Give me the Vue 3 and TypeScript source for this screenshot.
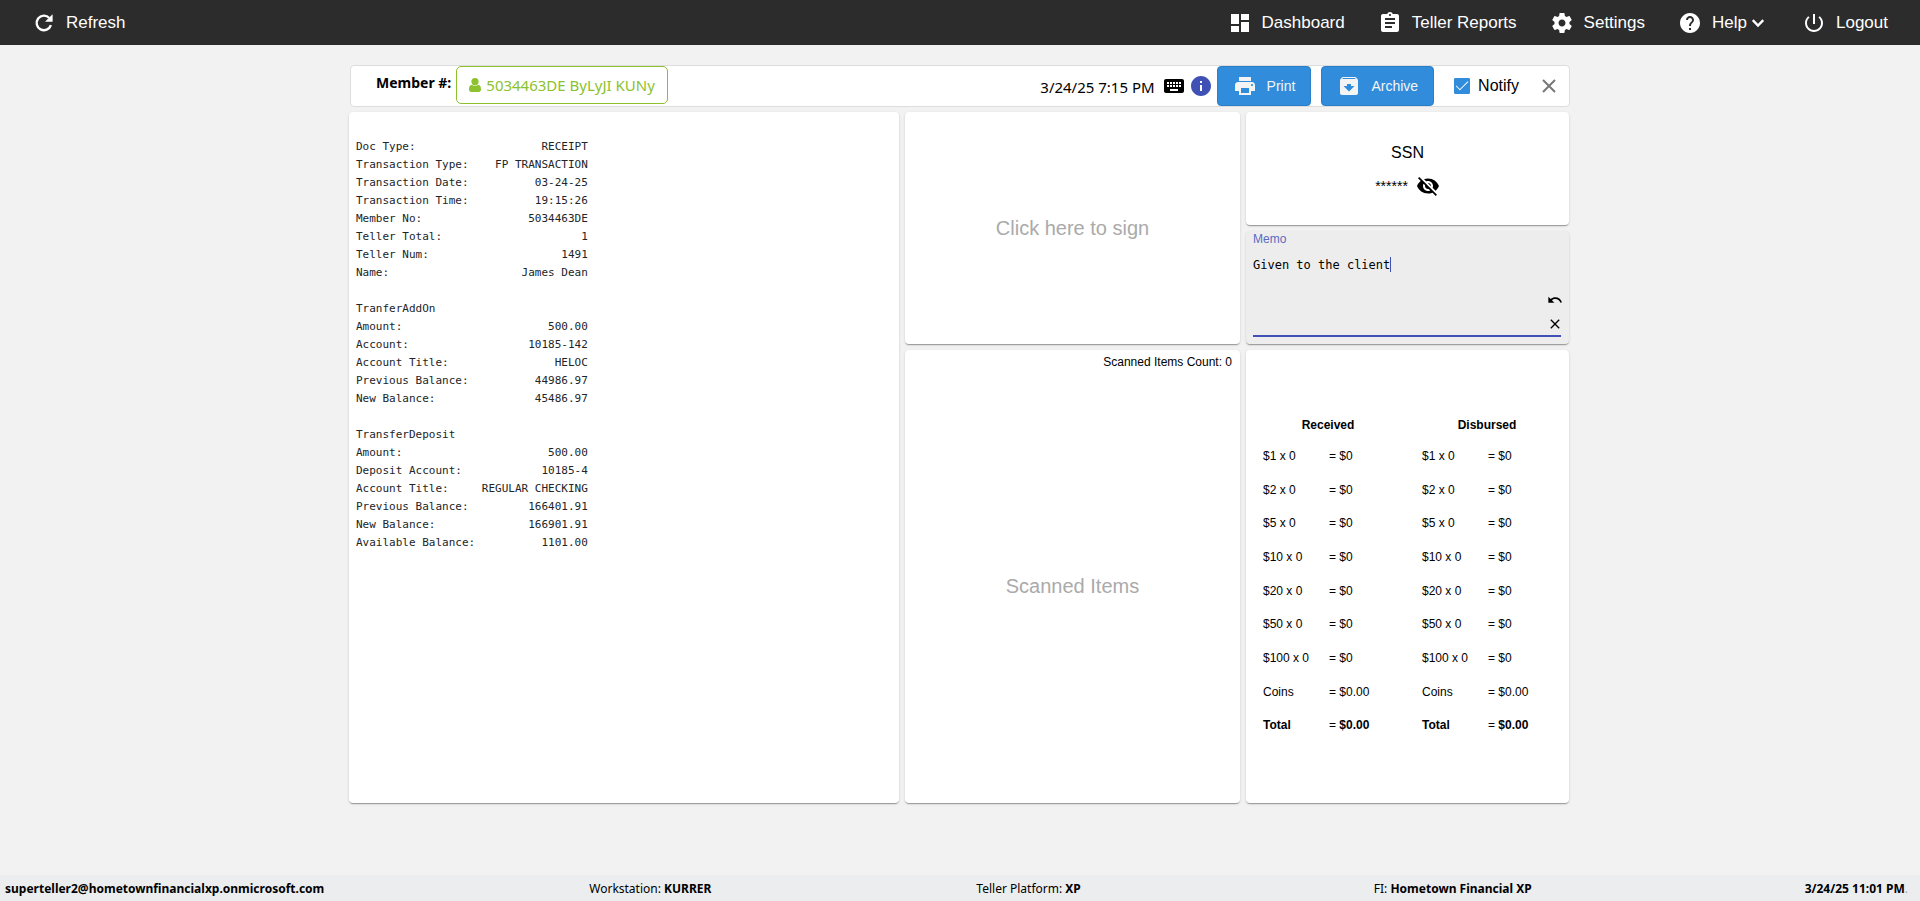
<script setup lang="ts">
import { ref } from 'vue'

interface NavItem {
  label: string
  path: string
  menu?: boolean
}

interface CashRow {
  label: string
  amount: string
  total?: boolean
}

const navItems: NavItem[] = [
  { label: 'Dashboard', path: 'M3 13h8V3H3v10zm0 8h8v-6H3v6zm10 0h8V11h-8v10zm0-18v6h8V3h-8z' },
  {
    label: 'Teller Reports',
    path: 'M19 3h-4.18C14.4 1.84 13.3 1 12 1c-1.3 0-2.4.84-2.82 2H5c-1.1 0-2 .9-2 2v14c0 1.1.9 2 2 2h14c1.1 0 2-.9 2-2V5c0-1.1-.9-2-2-2zm-7 0c.55 0 1 .45 1 1s-.45 1-1 1-1-.45-1-1 .45-1 1-1zm2 14H7v-2h7v2zm3-4H7v-2h10v2zm0-4H7V7h10v2z',
  },
  {
    label: 'Settings',
    path: 'M19.43 12.98c.04-.32.07-.64.07-.98s-.03-.66-.07-.98l2.11-1.65c.19-.15.24-.42.12-.64l-2-3.46c-.12-.22-.39-.3-.61-.22l-2.49 1c-.52-.4-1.08-.73-1.69-.98l-.38-2.65C14.46 2.18 14.25 2 14 2h-4c-.25 0-.46.18-.49.42l-.38 2.65c-.61.25-1.17.59-1.69.98l-2.49-1c-.23-.09-.49 0-.61.22l-2 3.46c-.13.22-.07.49.12.64l2.11 1.65c-.04.32-.07.65-.07.98s.03.66.07.98l-2.11 1.65c-.19.15-.24.42-.12.64l2 3.46c.12.22.39.3.61.22l2.49-1c.52.4 1.08.73 1.69.98l.38 2.65c.03.24.24.42.49.42h4c.25 0 .46-.18.49-.42l.38-2.65c.61-.25 1.17-.59 1.69-.98l2.49 1c.23.09.49 0 .61-.22l2-3.46c.12-.22.07-.49-.12-.64l-2.11-1.65zM12 15.5c-1.93 0-3.5-1.57-3.5-3.5s1.57-3.5 3.5-3.5 3.5 1.57 3.5 3.5-1.57 3.5-3.5 3.5z',
  },
  {
    label: 'Help',
    path: 'M12 2C6.48 2 2 6.48 2 12s4.48 10 10 10 10-4.48 10-10S17.52 2 12 2zm1 17h-2v-2h2v2zm2.07-7.75l-.9.92C13.45 12.9 13 13.5 13 15h-2v-.5c0-1.1.45-2.1 1.17-2.83l1.24-1.26c.37-.36.59-.86.59-1.41 0-1.1-.9-2-2-2s-2 .9-2 2H8c0-2.21 1.79-4 4-4s4 1.79 4 4c0 .88-.36 1.68-.93 2.25z',
    menu: true,
  },
  {
    label: 'Logout',
    path: 'M13 3h-2v10h2V3zm4.83 2.17l-1.42 1.42C17.99 7.86 19 9.81 19 12c0 3.87-3.13 7-7 7s-7-3.13-7-7c0-2.19 1.01-4.14 2.58-5.42L6.17 5.17C4.23 6.82 3 9.26 3 12c0 4.97 4.03 9 9 9s9-4.03 9-9c0-2.74-1.23-5.18-3.17-6.83z',
  },
]

const receiptWidth = 35
const receiptLines: string[][] = [
  ['Doc Type:', 'RECEIPT'],
  ['Transaction Type:', 'FP TRANSACTION'],
  ['Transaction Date:', '03-24-25'],
  ['Transaction Time:', '19:15:26'],
  ['Member No:', '5034463DE'],
  ['Teller Total:', '1'],
  ['Teller Num:', '1491'],
  ['Name:', 'James Dean'],
  [],
  ['TranferAddOn'],
  ['Amount:', '500.00'],
  ['Account:', '10185-142'],
  ['Account Title:', 'HELOC'],
  ['Previous Balance:', '44986.97'],
  ['New Balance:', '45486.97'],
  [],
  ['TransferDeposit'],
  ['Amount:', '500.00'],
  ['Deposit Account:', '10185-4'],
  ['Account Title:', 'REGULAR CHECKING'],
  ['Previous Balance:', '166401.91'],
  ['New Balance:', '166901.91'],
  ['Available Balance:', '1101.00'],
]
const receipt = receiptLines
  .map(([label = '', value = '']) => label + value.padStart(value ? receiptWidth - label.length : 0))
  .join('\n')

const cashRows: CashRow[] = [
  ...[1, 2, 5, 10, 20, 50, 100].map((n) => ({ label: `$${n} x 0`, amount: '$0' })),
  { label: 'Coins', amount: '$0.00' },
  { label: 'Total', amount: '$0.00', total: true },
]

const notify = ref(true)
const initialMemo = 'Given to the client'
const memo = ref(initialMemo)
</script>

<template>
  <div class="app">
    <header class="topbar">
      <button type="button" class="nav-item">
        <svg class="icon" viewBox="0 0 24 24" aria-hidden="true">
          <path d="M18.9 14.2A7.3 7.3 0 1 1 17.3 7" fill="none" stroke="currentColor" stroke-width="2.4" />
          <path d="M20.6 3.2v7.6H13z" />
        </svg>
        <span>Refresh</span>
      </button>
      <nav class="nav">
        <a v-for="item in navItems" :key="item.label" href="#" class="nav-item">
          <svg class="icon" viewBox="0 0 24 24" aria-hidden="true"><path :d="item.path" /></svg>
          <span>{{ item.label }}</span>
          <svg v-if="item.menu" class="chevron" viewBox="0 0 12 12" aria-hidden="true">
            <path d="M1.5 3.5 6 8.2l4.500-4.700" fill="none" stroke="currentColor" stroke-width="2" />
          </svg>
        </a>
      </nav>
    </header>

    <main class="main">
      <section class="toolbar">
        <div class="member">
          <span class="member-label">Member #:</span>
          <button type="button" class="member-button">
            <svg class="user-icon" viewBox="0 0 12 14" aria-hidden="true">
              <path d="M6 0a3.600 3.600 0 0 1 3.600 3.700C9.600 5.900 8 7.500 6 7.500S2.400 5.900 2.400 3.700A3.600 3.600 0 0 1 6 0z" />
              <path d="M2.900 6.800C1 7 0 8.600 0 11.200 0 12.900 1 14 2.400 14h7.200c1.400 0 2.400-1.100 2.400-2.800 0-2.600-1-4.200-2.900-4.400a4.400 4.400 0 0 1-6.200 0z" />
            </svg>
            <span>5034463DE ByLyJI KUNy</span>
          </button>
        </div>
        <div class="tools">
          <time class="stamp">3/24/25 7:15 PM</time>
          <svg class="icon keyboard" viewBox="0 0 24 24" aria-hidden="true">
            <path d="M20 5H4c-1.100 0-1.990.9-1.990 2L2 17c0 1.100.9 2 2 2h16c1.100 0 2-.9 2-2V7c0-1.100-.9-2-2-2zm-9 3h2v2h-2V8zm0 3h2v2h-2v-2zM8 8h2v2H8V8zm0 3h2v2H8v-2zm-1 2H5v-2h2v2zm0-3H5V8h2v2zm9 7H8v-2h8v2zm0-4h-2v-2h2v2zm0-3h-2V8h2v2zm3 3h-2v-2h2v2zm0-3h-2V8h2v2z" />
          </svg>
          <svg class="icon info" viewBox="0 0 24 24" aria-hidden="true">
            <path d="M12 2C6.480 2 2 6.480 2 12s4.480 10 10 10 10-4.480 10-10S17.520 2 12 2zm1 15h-2v-6h2v6zm0-8h-2V7h2v2z" />
          </svg>
          <button type="button" class="action">
            <svg class="icon" viewBox="0 0 24 24" aria-hidden="true">
              <path d="M19 8H5c-1.660 0-3 1.340-3 3v6h4v4h12v-4h4v-6c0-1.660-1.340-3-3-3zm-3 11H8v-5h8v5zm3-7c-.55 0-1-.45-1-1s.45-1 1-1 1 .45 1 1-.45 1-1 1zm-1-9H6v4h12V3z" />
            </svg>
            <span>Print</span>
          </button>
          <button type="button" class="action archive">
            <svg class="icon" viewBox="0 0 24 24" aria-hidden="true">
              <path d="M20.540 5.230l-1.390-1.680C18.880 3.210 18.470 3 18 3H6c-.47 0-.88.21-1.160.55L3.460 5.230C3.170 5.570 3 6.020 3 6.500V19c0 1.100.9 2 2 2h14c1.100 0 2-.9 2-2V6.500c0-.48-.17-.93-.46-1.270zM12 17.500L6.500 12H10v-2h4v2h3.500L12 17.500zM5.120 5l.81-1h12l.94 1H5.120z" />
            </svg>
            <span>Archive</span>
          </button>
          <label class="notify">
            <input v-model="notify" type="checkbox" />
            <span>Notify</span>
          </label>
          <button type="button" class="close" aria-label="Close">
            <svg viewBox="0 0 14 14" aria-hidden="true"><path d="M1 1l12 12M13 1 1 13" /></svg>
          </button>
        </div>
      </section>

      <section class="cards">
        <article class="card receipt-card">
          <pre class="receipt">{{ receipt }}</pre>
        </article>

        <button type="button" class="card sign-card placeholder">Click here to sign</button>

        <article class="card scan-card">
          <p class="scan-count">Scanned Items Count: 0</p>
          <div class="scan-body placeholder">Scanned Items</div>
        </article>

        <article class="card ssn-card">
          <h2 class="ssn-title">SSN</h2>
          <div class="ssn-value">
            <span>******</span>
            <button type="button" class="plain-button" aria-label="Show SSN">
              <svg class="icon" viewBox="0 0 24 24" aria-hidden="true">
                <path d="M12 7c2.760 0 5 2.240 5 5 0 .65-.13 1.260-.36 1.830l2.920 2.920c1.510-1.260 2.700-2.890 3.430-4.750-1.730-4.390-6-7.500-11-7.500-1.400 0-2.740.25-3.980.7l2.160 2.160C10.740 7.130 11.350 7 12 7zM2 4.270l2.280 2.280.46.46C3.080 8.300 1.780 10.020 1 12c1.730 4.390 6 7.500 11 7.500 1.550 0 3.030-.3 4.380-.84l.42.42L19.730 22 21 20.730 3.270 3 2 4.270zM7.530 9.800l1.550 1.550c-.05.21-.08.43-.08.65 0 1.660 1.340 3 3 3 .22 0 .44-.03.65-.08l1.550 1.550c-.67.33-1.410.53-2.200.53-2.760 0-5-2.240-5-5 0-.79.2-1.530.53-2.200zm4.310-.78l3.150 3.150.02-.16c0-1.660-1.340-3-3-3l-.17.01z" />
              </svg>
            </button>
          </div>
        </article>

        <article class="card memo-card">
          <label class="memo-label" for="memo">Memo</label>
          <div class="memo-field">
            <textarea id="memo" v-model="memo" class="memo-input" spellcheck="false"></textarea>
            <i class="caret" :style="{ left: memo.length + 'ch' }"></i>
            <div class="memo-tools">
              <button type="button" class="plain-button" aria-label="Undo" @click="memo = initialMemo">
                <svg class="small-icon" viewBox="0 0 24 24" aria-hidden="true">
                  <path d="M12.500 8c-2.650 0-5.050.99-6.900 2.600L2 7v9h9l-3.620-3.620c1.390-1.160 3.160-1.880 5.120-1.880 3.540 0 6.550 2.310 7.600 5.500l2.370-.78C21.080 11.030 17.150 8 12.500 8z" />
                </svg>
              </button>
              <button type="button" class="plain-button" aria-label="Clear" @click="memo = ''">
                <svg class="small-icon" viewBox="0 0 24 24" aria-hidden="true">
                  <path d="M19 6.410L17.590 5 12 10.590 6.410 5 5 6.410 10.590 12 5 17.590 6.410 19 12 13.410 17.590 19 19 17.590 13.410 12z" />
                </svg>
              </button>
            </div>
          </div>
        </article>

        <article class="card cash-card">
          <table v-for="title in ['Received', 'Disbursed']" :key="title" class="cash">
            <thead>
              <tr><th colspan="2">{{ title }}</th></tr>
            </thead>
            <tbody>
              <tr v-for="row in cashRows" :key="row.label" :class="{ total: row.total }">
                <td class="cash-label">{{ row.label }}</td>
                <td>= <span>{{ row.amount }}</span></td>
              </tr>
            </tbody>
          </table>
        </article>
      </section>
    </main>

    <footer class="footer">
      <strong>superteller2@hometownfinancialxp.onmicrosoft.com</strong>
      <span>Workstation: <strong>KURRER</strong></span>
      <span>Teller Platform: <strong>XP</strong></span>
      <span class="institution">FI: <strong>Hometown Financial XP</strong></span>
      <span><strong>3/24/25 11:01 PM</strong><span class="dot">.</span></span>
    </footer>
  </div>
</template>

<style>
body {
  margin: 0;
  background: #f2f2f2;
}
</style>

<style scoped>
* {
  box-sizing: border-box;
}

.app {
  display: flex;
  flex-direction: column;
  min-height: 100vh;
  color: #000;
  font-family: "Liberation Sans", Arial, sans-serif;
  font-size: 16px;
}

button {
  font-family: inherit;
  cursor: pointer;
}

.icon {
  flex: none;
  width: 24px;
  height: 24px;
  fill: currentColor;
}

.topbar {
  display: flex;
  align-items: center;
  justify-content: space-between;
  height: 45px;
  padding: 0 32px;
  background: #2c2c2c;
}

.nav {
  display: flex;
  gap: 33px;
}

.nav-item {
  display: flex;
  align-items: center;
  gap: 10px;
  padding: 0;
  border: 0;
  background: none;
  color: #fff;
  font-size: 17px;
  line-height: 24px;
  text-decoration: none;
}

.chevron {
  width: 14px;
  height: 14px;
  margin: 0 4px 0 -6px;
}

.main {
  display: flex;
  flex: 1;
  flex-direction: column;
  gap: 5px;
  width: 100%;
  max-width: 1222px;
  margin: 0 auto;
  padding: 20px 0 72px;
}

.toolbar {
  display: flex;
  justify-content: space-between;
  height: 42px;
  margin: 0 1px;
  border: 1px solid #ddd;
  border-radius: 4px;
  background: #fff;
  font-family: "Noto Sans", "Open Sans", sans-serif;
}

.member {
  display: flex;
  align-items: flex-start;
  gap: 5px;
  padding-left: 25px;
}

.member-label {
  font-size: 14px;
  font-weight: 700;
  line-height: 34px;
}

.member-button {
  display: flex;
  align-items: center;
  gap: 5px;
  height: 38px;
  padding: 0 12px;
  border: 1px solid #8cc22e;
  border-radius: 5px;
  background: #fff;
  color: #8cc22e;
  font-size: 15px;
}

.user-icon {
  width: 12px;
  height: 14px;
  fill: currentColor;
}

.tools {
  display: flex;
  align-items: center;
}

.stamp {
  padding-top: 2px;
  font-size: 15px;
}

.keyboard {
  margin: 0 3px 0 7px;
}

.info {
  margin-right: 4px;
  color: #3f51b5;
}

.action {
  display: flex;
  align-items: center;
  gap: 10px;
  height: 40px;
  padding: 0 15px;
  border: 1px solid #2a7fc8;
  border-radius: 4px;
  background: #318cdb;
  color: #f4f4f4;
  font-family: "Liberation Sans", Arial, sans-serif;
  font-size: 14px;
}

.archive {
  margin: 0 20px 0 10px;
}

.notify {
  display: flex;
  align-items: center;
  gap: 8px;
  font-family: "Liberation Sans", Arial, sans-serif;
}

.notify input {
  display: grid;
  place-items: center;
  width: 16px;
  height: 16px;
  margin: 0;
  border: 1px solid #318cdb;
  border-radius: 1px;
  appearance: none;
}

.notify input:checked {
  background: #318cdb;
}

.notify input:checked::after {
  width: 11px;
  height: 5px;
  border: solid #fff;
  border-width: 0 0 1px 1px;
  content: "";
  transform: translateY(-2px) rotate(-45deg);
}

.close {
  display: flex;
  margin: 0 13px 0 23px;
  padding: 0;
  border: 0;
  background: none;
}

.close svg {
  width: 14px;
  height: 14px;
  fill: none;
  stroke: #777;
  stroke-width: 2;
}

.cards {
  display: grid;
  flex: 1;
  grid-template-columns: 550fr 335fr 323fr;
  grid-template-rows: 1fr 1fr 4fr;
  gap: 6px;
  padding-right: 2px;
}

.card {
  min-width: 0;
  min-height: 0;
  border: 0;
  border-radius: 4px;
  background: #fff;
  box-shadow:
    0 2px 1px -1px rgba(0, 0, 0, 0.2),
    0 1px 1px 0 rgba(0, 0, 0, 0.14),
    0 1px 3px 0 rgba(0, 0, 0, 0.12);
}

.receipt-card {
  grid-row: 1 / 4;
  grid-column: 1;
  padding: 26px 7px;
}

.receipt {
  margin: 0;
  color: #212529;
  font-family: "DejaVu Sans Mono", monospace;
  font-size: 11px;
  line-height: 18px;
}

.placeholder {
  color: #aaa;
  font-size: 20px;
}

.sign-card {
  grid-row: 1 / 3;
  grid-column: 2;
}

.scan-card {
  display: flex;
  grid-row: 3;
  grid-column: 2;
  flex-direction: column;
}

.scan-count {
  margin: 0;
  padding: 4px 8px 0;
  font-size: 12px;
  line-height: 16px;
  text-align: right;
}

.scan-body {
  display: flex;
  flex: 1;
  align-items: center;
  justify-content: center;
}

.ssn-card {
  display: flex;
  grid-row: 1;
  grid-column: 3;
  flex-direction: column;
  align-items: center;
  justify-content: center;
  gap: 11px;
  padding-top: 4px;
}

.ssn-title {
  margin: 0;
  font-size: 16px;
  font-weight: 400;
  line-height: 20px;
}

.ssn-value {
  display: flex;
  align-items: center;
  gap: 8px;
  font-size: 14px;
}

.plain-button {
  display: flex;
  padding: 0;
  border: 0;
  background: none;
  color: #000;
}

.memo-card {
  display: flex;
  grid-row: 2;
  grid-column: 3;
  flex-direction: column;
  padding: 0 8px 7px 7px;
  background: #ededed;
}

.memo-label {
  color: #5c6bc0;
  font-size: 12px;
  line-height: 16px;
}

.memo-field {
  position: relative;
  display: flex;
  flex: 1;
  padding-top: 10px;
  border-bottom: 2px solid #3f51b5;
  font-family: "DejaVu Sans Mono", monospace;
  font-size: 12px;
}

.memo-input {
  flex: 1;
  min-width: 0;
  padding: 0;
  border: 0;
  outline: 0;
  background: none;
  color: #000;
  font: inherit;
  line-height: 16px;
  resize: none;
}

.caret {
  position: absolute;
  top: 10px;
  width: 1px;
  height: 15px;
  background: #3f51b5;
}

.memo-tools {
  display: flex;
  flex-direction: column;
  justify-content: flex-end;
  gap: 8px;
  margin-right: -2px;
  padding-bottom: 3px;
}

.small-icon {
  width: 16px;
  height: 16px;
}

.cash-card {
  display: flex;
  grid-row: 3;
  grid-column: 3;
  align-items: center;
  justify-content: space-between;
  padding: 0 17px;
}

.cash {
  width: 130px;
  height: 331px;
  border-collapse: collapse;
  font-size: 12px;
}

.cash th {
  height: 28px;
  padding: 0;
}

.cash td {
  padding: 0;
  white-space: nowrap;
}

.cash-label {
  width: 66px;
}

.total .cash-label,
.total span {
  font-weight: 700;
}

.footer {
  display: flex;
  align-items: center;
  justify-content: space-between;
  height: 26px;
  padding: 0 12px 0 5px;
  background: #ebedef;
  font-family: "Noto Sans", "Open Sans", sans-serif;
  font-size: 12px;
}

.institution {
  padding: 0 8px 0 28px;
}

.dot {
  color: #aaa;
}
</style>
